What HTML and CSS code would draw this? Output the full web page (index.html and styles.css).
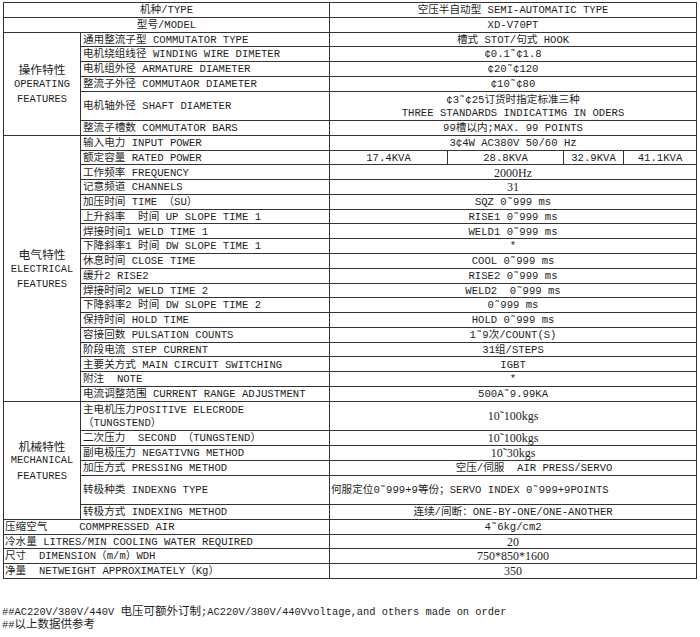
FILE: index.html
```html
<!DOCTYPE html>
<html lang="zh-CN">
<head>
<meta charset="utf-8">
<title>XD-V70PT</title>
<link rel="stylesheet" href="styles.css">
</head>
<body>
<table class="spec">
<colgroup><col class="c1"><col class="c2"><col class="c3"><col class="c4"><col class="c5"><col class="c6"></colgroup>
<tbody>
<tr><td colspan="2" class="v">机种/TYPE</td><td colspan="4" class="v">空压半自动型 SEMI-AUTOMATIC TYPE</td></tr>
<tr><td colspan="2" class="v">型号/MODEL</td><td colspan="4" class="v">XD-V70PT</td></tr>
<tr><td rowspan="6" class="cat"><span class="zh">操作特性</span><span class="en">OPERATING</span><span class="en">FEATURES</span></td><td>通用整流子型 COMMUTATOR TYPE</td><td colspan="4" class="v">槽式 STOT/句式 HOOK</td></tr>
<tr><td>电机绕组线径 WINDING WIRE DIMETER</td><td colspan="4" class="v">¢0.1˜¢1.8</td></tr>
<tr><td>电机组外径 ARMATURE DIAMETER</td><td colspan="4" class="v">¢20˜¢120</td></tr>
<tr><td>整流子外径 COMMUTAOR DIAMETER</td><td colspan="4" class="v">¢10˜¢80</td></tr>
<tr class="dbl"><td>电机轴外径 SHAFT DIAMETER</td><td colspan="4" class="v">¢3˜¢25订货时指定标准三种
THREE STANDARDS INDICATIMG IN ODERS</td></tr>
<tr><td>整流子槽数 COMMUTATOR BARS</td><td colspan="4" class="v">99槽以内;MAX. 99 POINTS</td></tr>
<tr><td rowspan="18" class="cat"><span class="zh">电气特性</span><span class="en">ELECTRICAL</span><span class="en">FEATURES</span></td><td>输入电力 INPUT POWER</td><td colspan="4" class="v">3¢4W AC380V 50/60 Hz</td></tr>
<tr><td>额定容量 RATED POWER</td><td class="v">17.4KVA</td><td class="v">28.8KVA</td><td class="v">32.9KVA</td><td class="v">41.1KVA</td></tr>
<tr><td>工作频率 FREQUENCY</td><td colspan="4" class="v ser">2000Hz</td></tr>
<tr><td>记意频道 CHANNELS</td><td colspan="4" class="v ser">31</td></tr>
<tr><td>加压时间 TIME （SU）</td><td colspan="4" class="v">SQZ 0˜999 ms</td></tr>
<tr><td>上升斜率  时间 UP SLOPE TIME 1</td><td colspan="4" class="v">RISE1 0˜999 ms</td></tr>
<tr><td>焊接时间1 WELD TIME 1</td><td colspan="4" class="v">WELD1 0˜999 ms</td></tr>
<tr><td>下降斜率1 时间 DW SLOPE TIME 1</td><td colspan="4" class="v">*</td></tr>
<tr><td>休息时间 CLOSE TIME</td><td colspan="4" class="v">COOL 0˜999 ms</td></tr>
<tr><td>缓升2 RISE2</td><td colspan="4" class="v">RISE2 0˜999 ms</td></tr>
<tr><td>焊接时间2 WELD TIME 2</td><td colspan="4" class="v">WELD2  0˜999 ms</td></tr>
<tr><td>下降斜率2 时间 DW SLOPE TIME 2</td><td colspan="4" class="v">0˜999 ms</td></tr>
<tr><td>保持时间 HOLD TIME</td><td colspan="4" class="v">HOLD 0˜999 ms</td></tr>
<tr><td>容接回数 PULSATION COUNTS</td><td colspan="4" class="v">1˜9次/COUNT(S)</td></tr>
<tr><td>阶段电流 STEP CURRENT</td><td colspan="4" class="v">31组/STEPS</td></tr>
<tr><td>主要关方式 MAIN CIRCUIT SWITCHING</td><td colspan="4" class="v">IGBT</td></tr>
<tr><td>附注  NOTE</td><td colspan="4" class="v">*</td></tr>
<tr><td>电流调整范围 CURRENT RANGE ADJUSTMENT</td><td colspan="4" class="v">500A˜9.99KA</td></tr>
<tr class="dbl"><td rowspan="6" class="cat"><span class="zh">机械特性</span><span class="en">MECHANICAL</span><span class="en">FEATURES</span></td><td>主电机压力POSITIVE ELECRODE
（TUNGSTEND）</td><td colspan="4" class="v ser">10˜100kgs</td></tr>
<tr><td>二次压力  SECOND （TUNGSTEND）</td><td colspan="4" class="v ser">10˜100kgs</td></tr>
<tr><td>副电极压力 NEGATIVNG METHOD</td><td colspan="4" class="v ser">10˜30kgs</td></tr>
<tr><td>加压方式 PRESSING METHOD</td><td colspan="4" class="v shift">空压/伺服  AIR PRESS/SERVO</td></tr>
<tr class="dbl"><td>转极种类 INDEXNG TYPE</td><td colspan="4" class="left">何服定位0˜999+9等份；SERVO INDEX 0˜999+9POINTS</td></tr>
<tr><td>转极方式 INDEXING METHOD</td><td colspan="4" class="v">连续/间断：ONE-BY-ONE/ONE-ANOTHER</td></tr>
<tr><td colspan="2" class="edge">压缩空气     COMMPRESSED AIR</td><td colspan="4" class="v">4˜6kg/cm2</td></tr>
<tr><td colspan="2" class="edge">冷水量 LITRES/MIN COOLING WATER REQUIRED</td><td colspan="4" class="v ser">20</td></tr>
<tr><td colspan="2" class="edge">尺寸  DIMENSION（m/m）WDH</td><td colspan="4" class="v ser">750*850*1600</td></tr>
<tr><td colspan="2" class="edge">净量  NETWEIGHT APPROXIMATELY（Kg）</td><td colspan="4" class="v ser">350</td></tr>
</tbody>
</table>
<div class="notes">
<p>##AC220V/380V/440V <span class="zh">电压可额外订制</span>;AC220V/380V/440Vvoltage,and others made on order</p>
<p>##<span class="zh">以上数据供参考</span></p>
</div>
</body>
</html>
```

FILE: styles.css
```css
html, body {
  margin: 0;
  padding: 0;
  background: #ffffff;
}

body {
  color: #1e1e1e;
  font-family: "Liberation Mono", "Noto Sans CJK SC", monospace;
  font-size: 10.6px;
}

.spec {
  border-collapse: collapse;
  table-layout: fixed;
  width: 693px;
  margin: 2px 0 0 3px;
}

.c1 { width: 77px; }
.c2 { width: 249px; }
.c3 { width: 118px; }
.c4 { width: 116px; }
.c5 { width: 60px; }
.c6 { width: 73px; }

.spec td {
  border: 1px solid #333333;
  padding: 2px 0 0 2px;
  height: 11.77px;
  line-height: 11.5px;
  vertical-align: middle;
  white-space: pre;
  overflow: hidden;
}

.spec tr.dbl td {
  height: 26.54px;
  line-height: 13px;
}

.spec td.v {
  text-align: center;
  padding-left: 0;
}

.spec td.shift {
  padding-left: 42px;
}

.spec td.left {
  text-align: left;
  padding-left: 1px;
}

.spec td.edge {
  padding-left: 1px;
}

.spec td.ser {
  font-family: "Liberation Serif", "Noto Sans CJK SC", serif;
  font-size: 12px;
}

.spec td.cat {
  text-align: center;
  padding: 2px 0 0 0;
  white-space: normal;
  line-height: 15.5px;
}

.cat .zh,
.cat .en {
  display: block;
  line-height: 15.5px;
}

.cat .zh {
  font-family: "Noto Sans CJK SC", sans-serif;
  font-size: 11.8px;
}

.cat .en {
  font-size: 10.4px;
}

.notes {
  margin: 25px 0 0 2px;
  font-size: 10.4px;
}

.notes p {
  margin: 0;
  height: 13px;
  line-height: 13px;
  white-space: pre;
}

.notes .zh {
  display: inline-block;
  font-family: "Noto Sans CJK SC", sans-serif;
  font-size: 11.5px;
  line-height: 12px;
}
```
